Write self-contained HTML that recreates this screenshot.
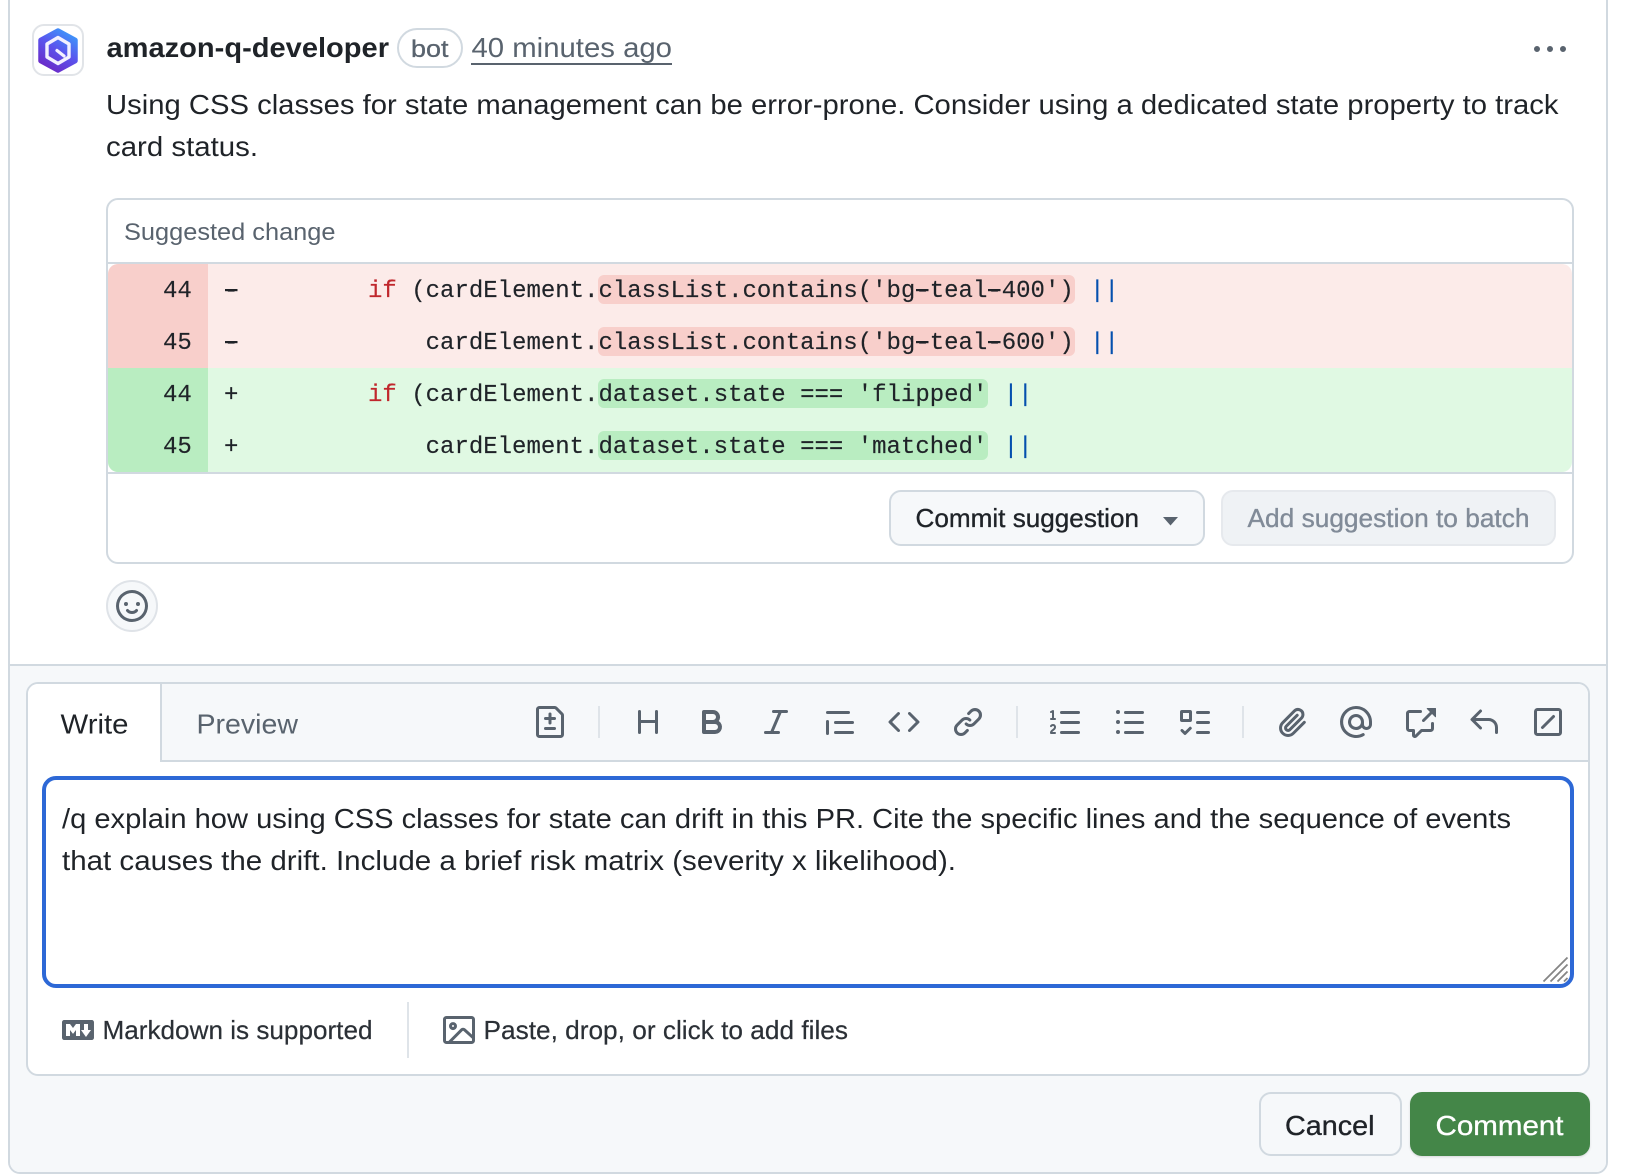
<!DOCTYPE html>
<html lang="en">
<head>
<meta charset="utf-8">
<title>amazon-q-developer comment</title>
<style>
html,body{margin:0;padding:0;background:#fff;width:1638px;height:1174px;overflow:hidden}
.a{position:absolute;box-sizing:border-box}
#page{position:relative;width:1638px;height:1174px;overflow:hidden;background:#fff}
svg text{font-family:"Liberation Sans",Arial,sans-serif;font-size:28px;fill:#1f2328;white-space:pre}
svg text.m{font-family:"Liberation Mono",monospace;font-size:24px;stroke:#1f2328;stroke-width:.15px}
svg text.s{font-size:24px;fill:#59636e}
svg text.f{font-size:26px;fill:#2b3036}
svg text.b{font-size:26px;stroke:#1f2328;stroke-width:.35px}
.ic path{fill:#59636e}
</style>
</head>
<body>
<div id="page">
  <div class="a" style="left:8px;top:-20px;width:1600px;height:1194px;border:2px solid #d1d9e0;border-radius:12px;background:#fff"></div>
  <div class="a" style="left:10px;top:664px;width:1596px;height:508px;background:#f6f8fa;border-top:2px solid #d1d9e0;border-radius:0 0 10px 10px"></div>

  <div class="a" style="left:32px;top:24px;width:52px;height:52px;border:2px solid #e1e4e8;border-radius:12px;background:#fff"></div>

  <div class="a" style="left:397px;top:28px;width:66px;height:40px;border:2px solid #d1d9e0;border-radius:20px"></div>
  <div class="a" style="left:471px;top:63px;width:201px;height:2px;background:#59636e"></div>

  <div class="a" style="left:106px;top:198px;width:1468px;height:366px;border:2px solid #d1d9e0;border-radius:12px;background:#fff"></div>
  <div class="a" style="left:108px;top:262px;width:1464px;height:2px;background:#d1d9e0"></div>
  <div class="a" style="left:108px;top:472px;width:1464px;height:2px;background:#d1d9e0"></div>
  <div class="a" style="left:108px;top:264px;width:1464px;height:104px;background:#fcebe9;border-radius:10px 10px 0 0"></div>
  <div class="a" style="left:108px;top:368px;width:1464px;height:104px;background:#e0f9e3;border-radius:0 0 10px 10px"></div>
  <div class="a" style="left:108px;top:264px;width:100px;height:104px;background:#f8cfcb;border-radius:10px 0 0 0"></div>
  <div class="a" style="left:108px;top:368px;width:100px;height:104px;background:#b9edc1;border-radius:0 0 0 10px"></div>
  <div class="a" style="left:598px;top:275px;width:477px;height:29px;background:#f8cfcb;border-radius:6px"></div>
  <div class="a" style="left:598px;top:327px;width:477px;height:29px;background:#f8cfcb;border-radius:6px"></div>
  <div class="a" style="left:598px;top:379px;width:390px;height:29px;background:#b9edc1;border-radius:6px"></div>
  <div class="a" style="left:598px;top:431px;width:390px;height:29px;background:#b9edc1;border-radius:6px"></div>

  <div class="a" style="left:889px;top:490px;width:316px;height:56px;border:2px solid #d1d9e0;border-radius:12px;background:#f6f8fa"></div>
  <div class="a" style="left:1221px;top:490px;width:335px;height:56px;border:2px solid #e6e9ed;border-radius:12px;background:#eff2f5"></div>

  <div class="a" style="left:106px;top:580px;width:52px;height:52px;border:2px solid #dfe3e8;border-radius:50%;background:#f6f8fa"></div>

  <div class="a" style="left:26px;top:682px;width:1564px;height:394px;border:2px solid #d1d9e0;border-radius:12px;background:#fff"></div>
  <div class="a" style="left:28px;top:684px;width:1560px;height:76px;background:#f6f8fa;border-radius:10px 10px 0 0"></div>
  <div class="a" style="left:28px;top:760px;width:1560px;height:2px;background:#d1d9e0"></div>
  <div class="a" style="left:28px;top:684px;width:134px;height:78px;background:#fff;border-right:2px solid #d1d9e0;border-radius:10px 0 0 0"></div>

  <div class="a" style="left:598px;top:706px;width:2px;height:32px;background:#dfe4e9"></div>
  <div class="a" style="left:1016px;top:706px;width:2px;height:32px;background:#dfe4e9"></div>
  <div class="a" style="left:1242px;top:706px;width:2px;height:32px;background:#dfe4e9"></div>

  <div class="a" style="left:42px;top:776px;width:1532px;height:212px;border:4px solid #2d68d6;border-radius:14px;background:#fff"></div>
  <div class="a" style="left:407px;top:1002px;width:2px;height:56px;background:#dfe4e9"></div>

  <div class="a" style="left:1259px;top:1092px;width:143px;height:64px;border:2px solid #d1d9e0;border-radius:12px;background:#f6f8fa"></div>
  <div class="a" style="left:1410px;top:1092px;width:180px;height:64px;border-radius:12px;background:#448648;box-shadow:0 1px 2px rgba(31,35,40,.15)"></div>

  <svg class="a" style="left:0;top:0" width="1638" height="1174" viewBox="0 0 1638 1174" xmlns="http://www.w3.org/2000/svg">
    <defs>
      <linearGradient id="q" x1="0.85" y1="0" x2="0.3" y2="1">
        <stop offset="0" stop-color="#3b9bfb"/>
        <stop offset="0.5" stop-color="#5a55ee"/>
        <stop offset="1" stop-color="#6a2bc9"/>
      </linearGradient>
    </defs>
    <path d="M58 30.500 75.500 40v21L58 70.500 40.500 61V40Z" fill="url(#q)" stroke="url(#q)" stroke-width="4.500" stroke-linejoin="round"/>
    <path d="M58 37.500 69 44v13l-11 6.500L47 57V44Z" fill="none" stroke="#f3f0ff" stroke-width="3.400" stroke-linejoin="round"/>
    <path d="M57 50.500 64 56" stroke="#f3f0ff" stroke-width="3.200" stroke-linecap="round"/>

    <text x="106.500" y="57" font-weight="700" textLength="282.500" lengthAdjust="spacingAndGlyphs">amazon-q-developer</text>
    <text class="s" x="411" y="57" textLength="37.500" lengthAdjust="spacingAndGlyphs" style="stroke:#59636e;stroke-width:.3px">bot</text>
    <text x="471.500" y="57" textLength="200.500" lengthAdjust="spacingAndGlyphs" style="fill:#59636e">40 minutes ago</text>
    <g class="ic" transform="translate(1534 34) scale(2)"><path d="M8 9a1.500 1.500 0 1 0 0-3 1.500 1.500 0 0 0 0 3ZM1.500 9a1.500 1.500 0 1 0 0-3 1.500 1.500 0 0 0 0 3Zm13 0a1.500 1.500 0 1 0 0-3 1.500 1.500 0 0 0 0 3Z"/></g>

    <text x="106" y="114" textLength="1452.500" lengthAdjust="spacingAndGlyphs">Using CSS classes for state management can be error-prone. Consider using a dedicated state property to track</text>
    <text x="106" y="156" textLength="152" lengthAdjust="spacingAndGlyphs">card status.</text>

    <text class="s" x="124" y="240" textLength="211.500" lengthAdjust="spacingAndGlyphs">Suggested change</text>

    <text class="m" x="163" y="297">44</text>
    <text class="m" x="163" y="349">45</text>
    <text class="m" x="163" y="401">44</text>
    <text class="m" x="163" y="453">45</text>

    <text class="m" x="224" y="297">-         <tspan fill="#c0272d" stroke="#c0272d">if</tspan> (cardElement.classList.contains('bg-teal-400') <tspan dx="2" fill="#0550ae" stroke="#0550ae">||</tspan></text>
    <text class="m" x="224" y="349">-             cardElement.classList.contains('bg-teal-600') <tspan dx="2" fill="#0550ae" stroke="#0550ae">||</tspan></text>
    <text class="m" x="224" y="401">+         <tspan fill="#c0272d" stroke="#c0272d">if</tspan> (cardElement.dataset.state === 'flipped' <tspan dx="2" fill="#0550ae" stroke="#0550ae">||</tspan></text>
    <text class="m" x="224" y="453">+             cardElement.dataset.state === 'matched' <tspan dx="2" fill="#0550ae" stroke="#0550ae">||</tspan></text>
    <g fill="#1f2328">
      <rect x="225" y="289" width="12.500" height="2.200"/>
      <rect x="225" y="341" width="12.500" height="2.200"/>
      <rect x="916" y="289" width="12.500" height="2.200"/>
      <rect x="988" y="289" width="12.500" height="2.200"/>
      <rect x="916" y="341" width="12.500" height="2.200"/>
      <rect x="988" y="341" width="12.500" height="2.200"/>
    </g>

    <text class="b" x="915.500" y="527" textLength="223.500" lengthAdjust="spacingAndGlyphs">Commit suggestion</text>
    <path d="M1163 517h15l-7.500 8.500Z" fill="#59636e"/>
    <text class="b" x="1247.500" y="527" textLength="282" lengthAdjust="spacingAndGlyphs" style="fill:#818b98;stroke:#818b98">Add suggestion to batch</text>

    <g class="ic" transform="translate(116 590) scale(2)"><path d="M8 0a8 8 0 1 1 0 16A8 8 0 0 1 8 0ZM1.500 8a6.500 6.500 0 1 0 13 0 6.500 6.500 0 0 0-13 0Zm3.820 1.636a.75.75 0 0 1 1.038.175l.007.009c.103.118.22.222.35.31.264.178.683.37 1.285.37.602 0 1.020-.192 1.285-.371.13-.088.247-.192.35-.31l.007-.008a.75.75 0 0 1 1.222.87l-.022-.015c.02.013.021.015.021.015v.001l-.001.002-.002.003-.005.007-.014.019a2.066 2.066 0 0 1-.184.213c-.16.166-.338.316-.53.445-.63.418-1.370.638-2.127.629-.946 0-1.652-.308-2.126-.63a3.331 3.331 0 0 1-.715-.657l-.014-.02-.005-.006-.002-.003v-.002h-.001l.613-.432-.614.43a.75.75 0 0 1 .183-1.044ZM12 7a1 1 0 1 1-2 0 1 1 0 0 1 2 0ZM5 8a1 1 0 1 1 0-2 1 1 0 0 1 0 2Z"/></g>

    <text x="60.500" y="733.500" textLength="68" lengthAdjust="spacingAndGlyphs">Write</text>
    <text x="196.500" y="733.500" textLength="101.500" lengthAdjust="spacingAndGlyphs" style="fill:#59636e">Preview</text>

    <g class="ic">
      <g transform="translate(534 706) scale(2)"><path d="M1 1.750C1 .784 1.784 0 2.750 0h7.586c.464 0 .909.184 1.237.513l2.914 2.914c.329.328.513.773.513 1.237v9.586A1.750 1.750 0 0 1 13.250 16H2.750A1.750 1.750 0 0 1 1 14.250Zm1.750-.25a.25.25 0 0 0-.25.25v12.500c0 .138.112.25.25.25h10.500a.25.25 0 0 0 .25-.25V4.664a.25.25 0 0 0-.073-.177l-2.914-2.914a.25.25 0 0 0-.177-.073ZM8 3.250a.75.75 0 0 1 .75.75v1.500h1.500a.75.75 0 0 1 0 1.500h-1.500v1.500a.75.75 0 0 1-1.500 0V7h-1.500a.75.75 0 0 1 0-1.500h1.500V4A.75.75 0 0 1 8 3.250Zm-3 8a.75.75 0 0 1 .75-.75h4.500a.75.75 0 0 1 0 1.500h-4.500a.75.75 0 0 1-.75-.75Z"/></g>
      <g transform="translate(632 706) scale(2)"><path d="M3.750 2a.75.75 0 0 1 .75.75V7h7V2.750a.75.75 0 0 1 1.500 0v10.500a.75.75 0 0 1-1.500 0V8.500h-7v4.750a.75.75 0 0 1-1.500 0V2.750A.75.75 0 0 1 3.750 2Z"/></g>
      <g transform="translate(696 706) scale(2)"><path d="M4 2h4.500a3.501 3.501 0 0 1 2.852 5.530A3.499 3.499 0 0 1 9.500 14H4a1 1 0 0 1-1-1V3a1 1 0 0 1 1-1Zm1 7v3h4.500a1.500 1.500 0 0 0 0-3Zm3.500-2a1.500 1.500 0 0 0 0-3H5v3Z"/></g>
      <g transform="translate(760 706) scale(2)"><path d="M6 2.750A.75.75 0 0 1 6.750 2h6.500a.75.75 0 0 1 0 1.500h-2.505l-3.858 9H9.250a.75.75 0 0 1 0 1.500h-6.500a.75.75 0 0 1 0-1.500h2.505l3.858-9H6.750A.75.75 0 0 1 6 2.750Z"/></g>
      <g transform="translate(824 706) scale(2)"><path d="M1.750 2.500h10.500a.75.75 0 0 1 0 1.500H1.750a.75.75 0 0 1 0-1.500Zm4 5h8.500a.75.75 0 0 1 0 1.500h-8.500a.75.75 0 0 1 0-1.500Zm0 5h8.500a.75.75 0 0 1 0 1.500h-8.500a.75.75 0 0 1 0-1.500ZM2.500 7.750v6a.75.75 0 0 1-1.500 0v-6a.75.75 0 0 1 1.500 0Z"/></g>
      <g transform="translate(888 706) scale(2)"><path d="m11.280 3.220 4.250 4.250a.75.75 0 0 1 0 1.060l-4.250 4.250a.749.749 0 0 1-1.275-.326.749.749 0 0 1 .215-.734L13.940 8l-3.720-3.720a.749.749 0 0 1 .326-1.275.749.749 0 0 1 .734.215Zm-6.560 0a.751.751 0 0 1 1.042.018.751.751 0 0 1 .018 1.042L2.060 8l3.720 3.720a.749.749 0 0 1-.326 1.275.749.749 0 0 1-.734-.215L.47 8.530a.75.75 0 0 1 0-1.060Z"/></g>
      <g transform="translate(952 706) scale(2)"><path d="m7.775 3.275 1.250-1.250a3.500 3.500 0 1 1 4.950 4.950l-2.500 2.500a3.500 3.500 0 0 1-4.950 0 .751.751 0 0 1 .018-1.042.751.751 0 0 1 1.042-.018 1.998 1.998 0 0 0 2.830 0l2.500-2.500a2.002 2.002 0 0 0-2.830-2.830l-1.250 1.250a.751.751 0 0 1-1.042-.018.751.751 0 0 1-.018-1.042Zm-4.690 9.640a1.998 1.998 0 0 0 2.830 0l1.250-1.250a.751.751 0 0 1 1.042.018.751.751 0 0 1 .018 1.042l-1.250 1.250a3.500 3.500 0 1 1-4.950-4.950l2.500-2.500a3.500 3.500 0 0 1 4.950 0 .751.751 0 0 1-.018 1.042.751.751 0 0 1-1.042.018 1.998 1.998 0 0 0-2.830 0l-2.500 2.500a1.998 1.998 0 0 0 0 2.830Z"/></g>
      <g transform="translate(1050 706) scale(2)"><path d="M5 3.250a.75.75 0 0 1 .75-.75h8.500a.75.75 0 0 1 0 1.500h-8.500A.75.75 0 0 1 5 3.250Zm0 5a.75.75 0 0 1 .75-.75h8.500a.75.75 0 0 1 0 1.500h-8.500A.75.75 0 0 1 5 8.250Zm0 5a.75.75 0 0 1 .75-.75h8.500a.75.75 0 0 1 0 1.500h-8.500a.75.75 0 0 1-.75-.75ZM.924 10.320a.5.5 0 0 1-.851-.525l.001-.001.001-.002.002-.004.007-.011c.097-.144.215-.273.348-.384.228-.19.588-.392 1.068-.392.468 0 .858.181 1.126.484.259.294.377.673.377 1.038 0 .987-.686 1.495-1.156 1.845l-.047.035c-.303.225-.522.4-.654.597h1.357a.5.5 0 0 1 0 1H.5a.5.5 0 0 1-.5-.5c0-1.005.692-1.520 1.167-1.875l.035-.025c.531-.396.8-.625.8-1.078a.57.57 0 0 0-.128-.376C1.806 10.068 1.695 10 1.500 10a.658.658 0 0 0-.429.163.835.835 0 0 0-.144.153ZM2.003 2.500V6h.503a.5.5 0 0 1 0 1H.5a.5.5 0 0 1 0-1h.503V3.308l-.28.14a.5.5 0 0 1-.446-.895l1.003-.5a.5.5 0 0 1 .723.447Z"/></g>
      <g transform="translate(1114 706) scale(2)"><path d="M5.750 2.500h8.500a.75.75 0 0 1 0 1.500h-8.500a.75.75 0 0 1 0-1.500Zm0 5h8.500a.75.75 0 0 1 0 1.500h-8.500a.75.75 0 0 1 0-1.500Zm0 5h8.500a.75.75 0 0 1 0 1.500h-8.500a.75.75 0 0 1 0-1.500ZM2 14a1 1 0 1 1 0-2 1 1 0 0 1 0 2Zm1-6a1 1 0 1 1-2 0 1 1 0 0 1 2 0ZM2 4a1 1 0 1 1 0-2 1 1 0 0 1 0 2Z"/></g>
      <g transform="translate(1178 706) scale(2)"><path d="M2 2h4a1 1 0 0 1 1 1v4a1 1 0 0 1-1 1H2a1 1 0 0 1-1-1V3a1 1 0 0 1 1-1Zm4.655 8.595a.75.75 0 0 1 0 1.060L4.030 14.280a.75.75 0 0 1-1.060 0l-1.500-1.500a.749.749 0 0 1 .326-1.275.749.749 0 0 1 .734.215l.97.97 2.095-2.095a.75.75 0 0 1 1.060 0ZM9.750 2.500h5.500a.75.75 0 0 1 0 1.500h-5.500a.75.75 0 0 1 0-1.500Zm0 5h5.500a.75.75 0 0 1 0 1.500h-5.500a.75.75 0 0 1 0-1.500Zm0 5h5.500a.75.75 0 0 1 0 1.500h-5.500a.75.75 0 0 1 0-1.500Zm-7.250-9v3h3v-3Z"/></g>
      <g transform="translate(1276 706) scale(2)"><path d="M12.212 3.020a1.753 1.753 0 0 0-2.478.003l-5.830 5.830a3.007 3.007 0 0 0-.88 2.127c0 .795.315 1.551.88 2.116.567.567 1.333.89 2.126.89.79 0 1.548-.321 2.116-.89l5.480-5.480a.75.75 0 0 1 1.061 1.060l-5.480 5.480a4.492 4.492 0 0 1-3.177 1.330c-1.200 0-2.345-.487-3.187-1.330a4.483 4.483 0 0 1-1.320-3.177c0-1.195.475-2.341 1.320-3.186l5.830-5.830a3.250 3.250 0 0 1 5.553 2.297c0 .863-.343 1.691-.953 2.301L7.439 12.390c-.375.377-.884.59-1.416.593a1.998 1.998 0 0 1-1.412-.593 1.992 1.992 0 0 1 0-2.828l5.480-5.480a.751.751 0 0 1 1.042.018.751.751 0 0 1 .018 1.042l-5.480 5.480a.492.492 0 0 0 0 .707.499.499 0 0 0 .352.154.51.51 0 0 0 .356-.154l5.833-5.827a1.755 1.755 0 0 0 0-2.481Z"/></g>
      <g transform="translate(1340 706) scale(2)"><path d="M4.750 2.370a6.501 6.501 0 0 0 6.500 11.260.75.75 0 0 1 .75 1.298A7.999 7.999 0 0 1 .989 4.148 8 8 0 0 1 16 7.750v1.500a2.750 2.750 0 0 1-5.072 1.475 3.999 3.999 0 0 1-6.650-4.190A4 4 0 0 1 12 8v1.250a1.250 1.250 0 0 0 2.500 0V7.867a6.500 6.500 0 0 0-9.750-5.496ZM10.500 8a2.500 2.500 0 1 0-5 0 2.500 2.500 0 0 0 5 0Z"/></g>
      <g transform="translate(1404 706) scale(2)"><path d="M2.750 3.500a.25.25 0 0 0-.25.25v7.500c0 .138.112.25.25.25h2a.75.75 0 0 1 .75.75v2.190l2.720-2.720a.749.749 0 0 1 .53-.22h4.500a.25.25 0 0 0 .25-.25v-2.500a.75.75 0 0 1 1.500 0v2.500A1.750 1.750 0 0 1 13.250 13H9.060l-2.573 2.573A1.458 1.458 0 0 1 4 14.543V13H2.750A1.750 1.750 0 0 1 1 11.250v-7.500C1 2.784 1.784 2 2.750 2h5.500a.75.75 0 0 1 0 1.500ZM16 1.250v4.146a.25.25 0 0 1-.427.177L14.030 4.030l-3.750 3.750a.749.749 0 0 1-1.275-.326.749.749 0 0 1 .215-.734l3.750-3.750-1.543-1.543A.25.25 0 0 1 11.604 1h4.146a.25.25 0 0 1 .25.25Z"/></g>
      <g transform="translate(1468 706) scale(2)"><path d="M6.780 1.970a.75.75 0 0 1 0 1.060L3.810 6h6.440A4.750 4.750 0 0 1 15 10.750v2.500a.75.75 0 0 1-1.500 0v-2.500a3.250 3.250 0 0 0-3.250-3.250H3.810l2.970 2.970a.749.749 0 0 1-.326 1.275.749.749 0 0 1-.734-.215L1.470 7.280a.75.75 0 0 1 0-1.060l4.250-4.250a.75.75 0 0 1 1.060 0Z"/></g>
    </g>
    <g transform="translate(1532 706) scale(2)" fill="none" stroke="#59636e" stroke-width="1.500" stroke-linecap="round">
      <rect x="1.750" y="1.750" width="12.500" height="12.500" rx="1"/>
      <path d="M5.250 10.750 10.750 5.250"/>
    </g>

    <text x="62" y="828" textLength="1449" lengthAdjust="spacingAndGlyphs">/q explain how using CSS classes for state can drift in this PR. Cite the specific lines and the sequence of events</text>
    <text x="62" y="870" textLength="894" lengthAdjust="spacingAndGlyphs">that causes the drift. Include a brief risk matrix (severity x likelihood).</text>

    <path d="M1543.500 981.500 1567.500 957.500M1550.500 981.500 1567.500 964.500M1557.500 981.500 1567.500 971.500M1564 981.500 1567.500 978" stroke="#858585" stroke-width="1.800" fill="none"/>

    <g class="ic" transform="translate(62 1014) scale(2)"><path d="M14.850 3c.63 0 1.150.52 1.140 1.150v7.700c0 .63-.51 1.150-1.150 1.150H1.150C.52 13 0 12.480 0 11.860V4.150C0 3.520.52 3 1.150 3ZM9 11V5H7L5.500 7 4 5H2v6h2V8l1.500 1.920L7 8v3Zm2.990.5L14.500 8H13V5h-2v3H9.500Z"/></g>
    <text class="f" x="102.500" y="1039" textLength="270" lengthAdjust="spacingAndGlyphs" style="stroke:#2b3036;stroke-width:.2px">Markdown is supported</text>
    <g class="ic" transform="translate(443 1014) scale(2)"><path d="M16 13.250A1.750 1.750 0 0 1 14.250 15H1.750A1.750 1.750 0 0 1 0 13.250V2.750C0 1.784.784 1 1.750 1h12.500c.966 0 1.750.784 1.750 1.750ZM1.750 2.500a.25.25 0 0 0-.25.25v10.500c0 .138.112.25.25.25h.94l.03-.03 6.077-6.078a1.750 1.750 0 0 1 2.412-.06L14.500 10.310V2.750a.25.25 0 0 0-.25-.25Zm12.500 11a.25.25 0 0 0 .25-.25v-.917l-4.298-3.889a.25.25 0 0 0-.344.009L4.810 13.500ZM7 6a2 2 0 1 1-3.999.001A2 2 0 0 1 7 6ZM5.500 6a.5.5 0 1 0-.999.001A.5.5 0 0 0 5.500 6Z"/></g>
    <text class="f" x="483.500" y="1039" textLength="364.500" lengthAdjust="spacingAndGlyphs" style="stroke:#2b3036;stroke-width:.2px">Paste, drop, or click to add files</text>

    <text x="1285" y="1135" textLength="89.500" lengthAdjust="spacingAndGlyphs" style="stroke:#1f2328;stroke-width:.35px">Cancel</text>
    <text x="1435.500" y="1135" textLength="128" lengthAdjust="spacingAndGlyphs" style="fill:#fff;stroke:#fff;stroke-width:.35px">Comment</text>
  </svg>
</div>
</body>
</html>
